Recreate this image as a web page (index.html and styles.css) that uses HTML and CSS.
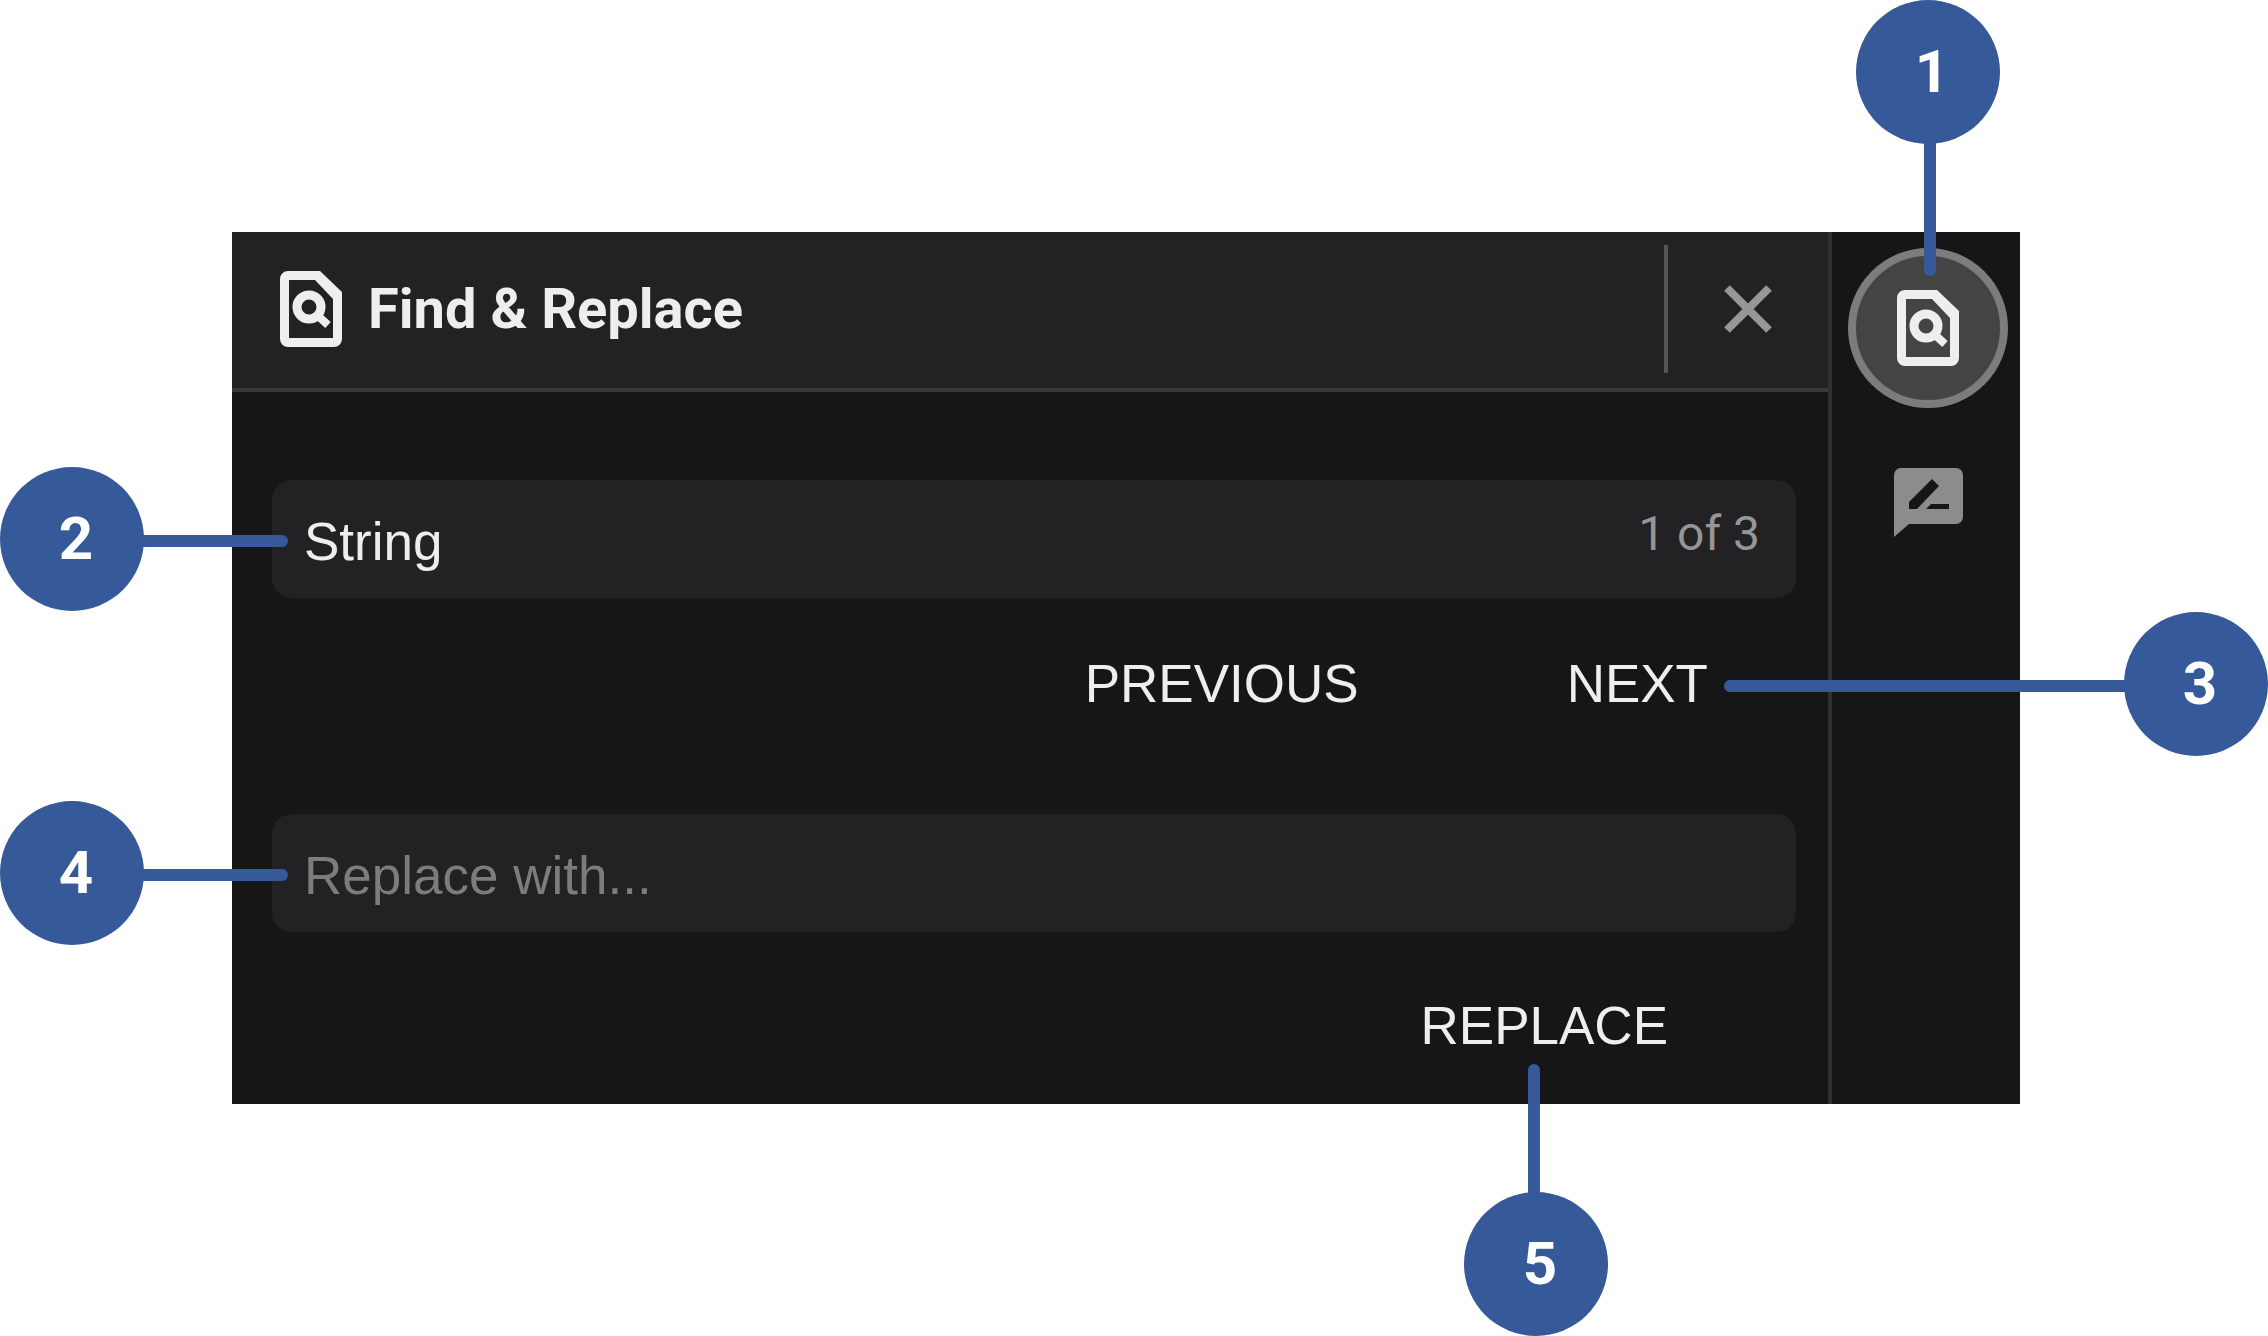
FILE: index.html
```html
<!DOCTYPE html>
<html lang="en">
<head>
    <meta charset="UTF-8">
    <meta name="viewport" content="width=device-width, initial-scale=1.0">
    <title>Find &amp; Replace</title>
    <link rel="stylesheet" href="styles.css">
</head>
<body>

<svg class="icon_defs" aria-hidden="true">
    <symbol id="icon_find" viewBox="0 0 62 76">
        <path fill="currentColor" fill-rule="evenodd" d="M8 0H40L62 21V68a8 8 0 0 1-8 8H8a8 8 0 0 1-8-8V8a8 8 0 0 1 8-8zM9 9V67H53V28L35 9z"/>
        <circle cx="29" cy="36" r="12" fill="none" stroke="currentColor" stroke-width="9"/>
        <path d="M37 44L48 54" fill="none" stroke="currentColor" stroke-width="8"/>
    </symbol>
</svg>

<main class="stage">
    <div class="app">
        <section class="panel">
            <header class="panel_header">
                <svg class="find_icon" aria-hidden="true"><use href="#icon_find"/></svg>
                <h1 class="panel_title">Find &amp; Replace</h1>
                <button class="close_button" type="button" aria-label="Close">
                    <svg class="close_icon" viewBox="0 0 48 48" aria-hidden="true">
                        <path d="M3 3L45 45M45 3L3 45" fill="none" stroke="currentColor" stroke-width="8"/>
                    </svg>
                </button>
            </header>

            <form class="panel_body">
                <div class="field">
                    <input class="field_input" type="text" value="String" aria-label="Find">
                    <span class="field_count">1 of 3</span>
                    <div class="callout callout_left"><span class="badge">2</span><span class="line"></span></div>
                </div>
                <div class="actions find_actions">
                    <button class="text_button" type="button">PREVIOUS</button>
                    <button class="text_button" type="button">NEXT</button>
                    <div class="callout callout_right"><span class="line"></span><span class="badge">3</span></div>
                </div>

                <div class="field">
                    <input class="field_input" type="text" placeholder="Replace with..." aria-label="Replace with">
                    <div class="callout callout_left"><span class="badge">4</span><span class="line"></span></div>
                </div>
                <div class="actions replace_actions">
                    <button class="text_button" type="button">REPLACE</button>
                    <div class="callout callout_bottom"><span class="line"></span><span class="badge">5</span></div>
                </div>
            </form>
        </section>

        <nav class="sidebar">
            <button class="tool_button active" type="button" aria-label="Find and replace">
                <svg class="find_icon" aria-hidden="true"><use href="#icon_find"/></svg>
            </button>
            <button class="tool_button" type="button" aria-label="Comments">
                <svg class="comment_icon" viewBox="0 0 69 69" aria-hidden="true">
                    <path fill="currentColor" fill-rule="evenodd" d="M7 0H62a7 7 0 0 1 7 7V49a7 7 0 0 1-7 7H15L0 69V7a7 7 0 0 1 7-7zM15 41H23L45 18L38 11L15 34zM32 41H55V36H37z"/>
                </svg>
            </button>
            <div class="callout callout_top"><span class="badge">1</span><span class="line"></span></div>
        </nav>
    </div>
</main>

</body>
</html>
```

FILE: styles.css
```css
* {
    box-sizing: border-box;
}

body {
    margin: 0;
    background: #fff;
    font-family: 'Liberation Sans', Arial, sans-serif;
}

button {
    padding: 0;
    border: 0;
    background: none;
    color: inherit;
    font: inherit;
    cursor: pointer;
}

.icon_defs {
    position: absolute;
    width: 0;
    height: 0;
}

.stage {
    padding: 232px 248px 232px 232px;
}

.app {
    display: flex;
    background: #161618;
    color: #eee;
}

.panel {
    flex: 1;
    border-right: 4px solid #303032;
}

.panel_header {
    display: flex;
    align-items: center;
    height: 160px;
    padding: 0 56px 2px 48px;
    background: #222224;
    border-bottom: 4px solid #3a3a3c;
}

.find_icon {
    width: 62px;
    height: 76px;
}

.panel_title {
    flex: 1;
    margin: 0 0 0 26px;
    font-family: Roboto, sans-serif;
    font-size: 56px;
    font-weight: 700;
    line-height: 64px;
}

.close_button {
    display: flex;
    align-items: center;
    height: 128px;
    padding-left: 56px;
    border-left: 4px solid #555557;
    color: #969696;
}

.close_icon {
    width: 48px;
    height: 48px;
}

.panel_body {
    padding: 88px 32px 44px 40px;
}

.field {
    display: flex;
    position: relative;
    height: 118px;
    padding: 0 36px 0 32px;
    background: #222224;
    border-radius: 20px;
}

.field_input {
    flex: 1;
    min-width: 0;
    padding: 4px 0 0;
    border: 0;
    outline: 0;
    background: none;
    color: #eee;
    font: inherit;
    font-size: 53px;
}

.field_input::placeholder {
    color: #7c7c7c;
    opacity: 1;
}

.field_count {
    color: #969696;
    font-family: Roboto, sans-serif;
    font-size: 48px;
    line-height: 108px;
}

.actions {
    display: flex;
    justify-content: flex-end;
    position: relative;
    font-size: 53px;
    line-height: 64px;
}

.find_actions {
    gap: 208px;
    padding: 54px 88px 98px 0;
}

.replace_actions {
    padding: 62px 128px 2px 0;
}

.sidebar {
    display: flex;
    flex-direction: column;
    align-items: center;
    gap: 60px;
    position: relative;
    padding: 16px 12px 0 16px;
}

.tool_button {
    display: flex;
    align-items: center;
    justify-content: center;
    color: #8c8c8c;
}

.tool_button.active {
    width: 160px;
    height: 160px;
    background: #444;
    border: 8px solid #7c7c7c;
    border-radius: 50%;
    color: #eee;
}

.comment_icon {
    width: 69px;
    height: 69px;
}

/* Numbered callouts, each one hangs off the control it points at */
.callout {
    display: flex;
    align-items: center;
    position: absolute;
    pointer-events: none;
}

.badge {
    flex: none;
    width: 144px;
    height: 144px;
    padding-left: 8px;
    border-radius: 50%;
    background: #36599a;
    color: #fff;
    font-family: Roboto, sans-serif;
    font-size: 60px;
    font-weight: 700;
    line-height: 144px;
    text-align: center;
}

.line {
    flex: 1;
    background: #36599a;
}

.callout_left {
    top: -13px;
    left: -272px;
    width: 288px;
}

.callout_right {
    top: 14px;
    right: -472px;
    width: 544px;
}

.callout_left .line,
.callout_right .line {
    height: 12px;
    margin-top: 4px;
}

.callout_left .line {
    margin-left: -8px;
    border-radius: 0 6px 6px 0;
}

.callout_right .line {
    margin-right: -8px;
    border-radius: 6px 0 0 6px;
}

.callout_top,
.callout_bottom {
    flex-direction: column;
}

.callout_top {
    top: -232px;
    right: 20px;
    height: 276px;
}

.callout_bottom {
    top: 132px;
    right: 188px;
    height: 272px;
}

.callout_top .line,
.callout_bottom .line {
    width: 12px;
}

.callout_top .line {
    margin: -8px 0 0 4px;
    border-radius: 0 0 6px 6px;
}

.callout_bottom .line {
    margin: 0 4px -8px 0;
    border-radius: 6px 6px 0 0;
}
```
